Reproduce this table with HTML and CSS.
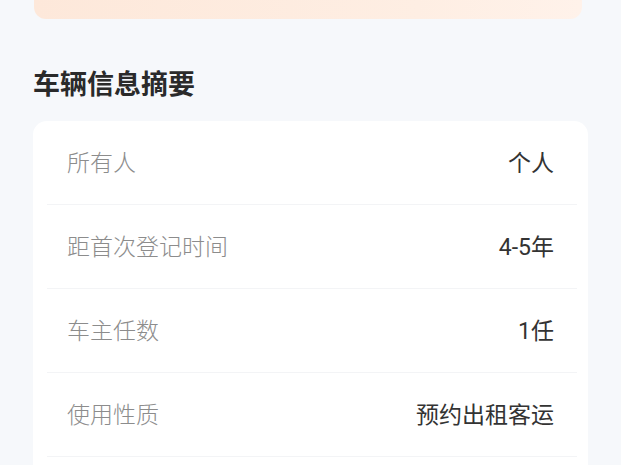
FILE: index.html
```html
<!DOCTYPE html>
<html lang="zh-CN">
<head>
  <meta charset="UTF-8" />
  <title>车辆信息摘要</title>
  <meta name="viewport" content="width=device-width, initial-scale=1.0" />
  <link rel="stylesheet" href="styles.css">
</head>
<body>

<div class="page">
  <div class="notice-bar"></div>

  <h2 class="section-title">车辆信息摘要</h2>

  <div class="info-card">
    <div class="info-row">
      <span class="info-label">所有人</span>
      <span class="info-value">个人</span>
    </div>
    <div class="info-row">
      <span class="info-label">距首次登记时间</span>
      <span class="info-value">4-5年</span>
    </div>
    <div class="info-row">
      <span class="info-label">车主任数</span>
      <span class="info-value">1任</span>
    </div>
    <div class="info-row">
      <span class="info-label">使用性质</span>
      <span class="info-value">预约出租客运</span>
    </div>
  </div>
</div>

</body>
</html>
```

FILE: styles.css
```css
body {
  margin: 0;
  font-family: Roboto, "Noto Sans CJK SC", sans-serif;
  background-color: #f6f8fb;
  color: #333;
}
.page {
  padding: 0 33px;
}
.notice-bar {
  height: 19px;
  margin: 0 6px 0 1px;
  border-radius: 0 0 12px 12px;
  background: linear-gradient(90deg, #fde8da, #feeee3 70%, #fff2ea);
}
.section-title {
  margin: 47px 0 17px;
  font-size: 27px;
  line-height: 38px;
  font-weight: bold;
  color: #2a2a2a;
}
.info-card {
  background-color: #fff;
  border-radius: 14px;
  padding-bottom: 40px;
}
.info-row {
  display: flex;
  justify-content: space-between;
  align-items: center;
  height: 80px;
  margin: 0 11px 0 14px;
  padding: 0 23px 3px 20px;
  border-bottom: 1px solid #f3f4f6;
  font-size: 23px;
}
.info-label {
  color: #8c8c8c;
  font-weight: 300;
}
.info-value {
  color: #333;
}
```
